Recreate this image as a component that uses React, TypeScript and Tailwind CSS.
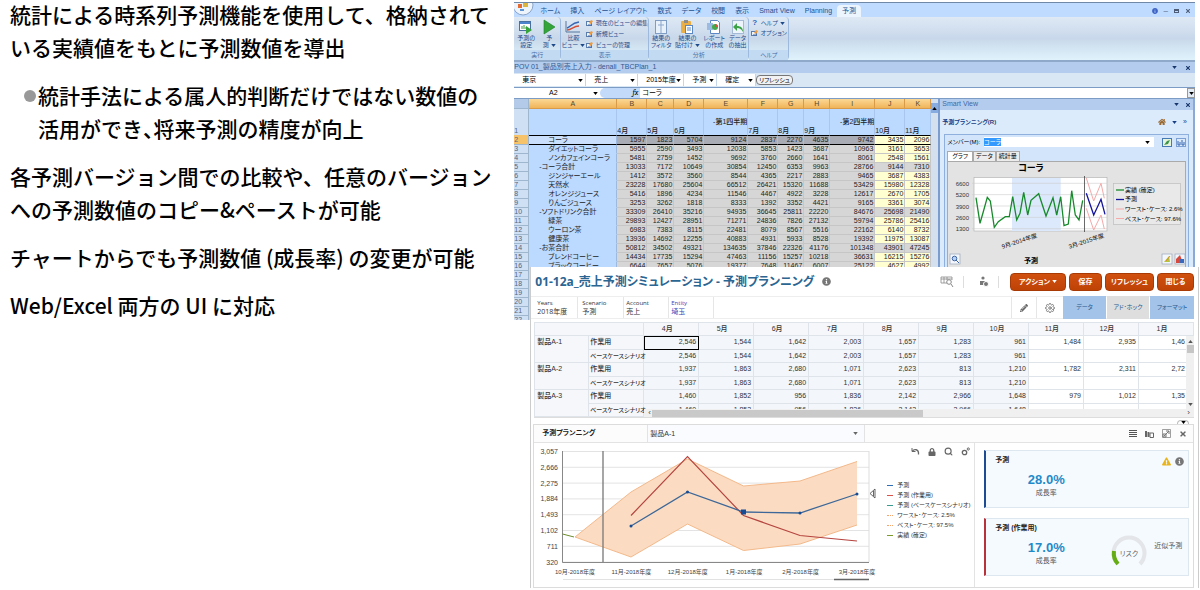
import type { ReactNode } from "react";
import { FaPencilAlt, FaLock, FaInfoCircle, FaExclamationTriangle, FaTimes, FaHome } from "react-icons/fa";
import { FiSettings, FiSearch } from "react-icons/fi";

const ribbonTabs = ["ホーム", "挿入", "ページ レイアウト", "数式", "データ", "校閲", "表示", "Smart View", "Planning", "予測"];

const columns = [
  { name: "A", width: "w-[88px]", head: "" },
  { name: "B", width: "w-[30px]", head: "4月" },
  { name: "C", width: "w-[27px]", head: "5月" },
  { name: "D", width: "w-[30px]", head: "6月" },
  { name: "E", width: "w-[44px]", head: "-第1四半期" },
  { name: "F", width: "w-[30px]", head: "7月" },
  { name: "G", width: "w-[26px]", head: "8月" },
  { name: "H", width: "w-[26px]", head: "9月" },
  { name: "I", width: "w-[45px]", head: "-第2四半期" },
  { name: "J", width: "w-[30px]", head: "10月" },
  { name: "K", width: "w-[26px]", head: "11月" },
];

const sheetRows: { label: string; total?: boolean; values: number[] }[] = [
  { label: "コーラ", values: [1597, 1823, 5704, 9124, 2837, 2270, 4635, 9742, 3435, 2096] },
  { label: "ダイエットコーラ", values: [5955, 2590, 3493, 12038, 5853, 1423, 3687, 10963, 3161, 3653] },
  { label: "ノンカフェインコーラ", values: [5481, 2759, 1452, 9692, 3760, 2660, 1641, 8061, 2548, 1561] },
  { label: "-コーラ合計", total: true, values: [13033, 7172, 10649, 30854, 12450, 6353, 9963, 28766, 9144, 7310] },
  { label: "ジンジャーエール", values: [1412, 3572, 3560, 8544, 4365, 2217, 2883, 9465, 3687, 4383] },
  { label: "天然水", values: [23228, 17680, 25604, 66512, 26421, 15320, 11688, 53429, 15980, 12328] },
  { label: "オレンジジュース", values: [5416, 1896, 4234, 11546, 4467, 4922, 3228, 12617, 2670, 1705] },
  { label: "りんごジュース", values: [3253, 3262, 1818, 8333, 1392, 3352, 4421, 9165, 3361, 3074] },
  { label: "-ソフトドリンク合計", total: true, values: [33309, 26410, 35216, 94935, 36645, 25811, 22220, 84676, 25698, 21490] },
  { label: "緑茶", values: [29893, 12427, 28951, 71271, 24836, 7826, 27132, 59794, 25786, 25416] },
  { label: "ウーロン茶", values: [6983, 7383, 8115, 22481, 8079, 8567, 5516, 22162, 6140, 8732] },
  { label: "健康茶", values: [13936, 14692, 12255, 40883, 4931, 5933, 8528, 19392, 11975, 13087] },
  { label: "-お茶合計", total: true, values: [50812, 34502, 49321, 134635, 37846, 22326, 41176, 101348, 43901, 47245] },
  { label: "ブレンドコーヒー", values: [14434, 17735, 15294, 47463, 11156, 15257, 10218, 36631, 16215, 15276] },
  { label: "ブラックコーヒー", values: [6644, 7657, 5076, 19377, 7648, 11467, 6007, 25122, 4627, 4992] },
];

const months = ["4月", "5月", "6月", "7月", "8月", "9月", "10月", "11月", "12月", "1月"];

const planRows = [
  { product: "製品A-1", scenario: "作業用", values: ["2,546", "1,544", "1,642", "2,003", "1,657", "1,283", "961", "1,484", "2,935", "1,46"] },
  { product: "", scenario: "ベースケースシナリオ", values: ["2,546", "1,544", "1,642", "2,003", "1,657", "1,283", "961", "", "", ""] },
  { product: "製品A-2", scenario: "作業用", values: ["1,937", "1,863", "2,680", "1,071", "2,623", "813", "1,210", "1,782", "2,311", "2,72"] },
  { product: "", scenario: "ベースケースシナリオ", values: ["1,937", "1,863", "2,680", "1,071", "2,623", "813", "1,210", "", "", ""] },
  { product: "製品A-3", scenario: "作業用", values: ["1,460", "1,852", "956", "1,836", "2,142", "2,966", "1,648", "979", "1,012", "1,35"] },
  { product: "", scenario: "ベースケースシナリオ", values: ["1,460", "1,852", "956", "1,836", "2,142", "2,966", "1,648", "", "", ""] },
];

function Caret({ className = "" }: { className?: string }) {
  return (
    <svg viewBox="0 0 6 4" className={`pointer-events-none h-[3px] w-[5px] ${className}`} fill="currentColor">
      <path d="M0 0h6L3 4z" />
    </svg>
  );
}

function PovSelect({ label, value, width }: { label: string; value: string; width: string }) {
  return (
    <div className={`relative flex items-center border-r border-[#c5d5ea] bg-white ${width}`}>
      <select aria-label={label} className="h-3 w-full appearance-none bg-transparent pl-2 text-[7px] leading-3">
        <option>{value}</option>
      </select>
      <Caret className="absolute right-0.5" />
    </div>
  );
}

function RibbonGroup({ title, width, children }: { title: string; width: string; children: ReactNode }) {
  return (
    <div className={`flex flex-col rounded-sm border-r border-[#9db9dd] ${width}`}>
      <div className="flex h-8 flex-1 justify-around">{children}</div>
      <div className="h-[10px] bg-[#c3daf3] text-center text-[6px] leading-[10px] text-[#4a6d9e]">{title}</div>
    </div>
  );
}

function BigButton({ icon, lines, caret }: { icon: ReactNode; lines: [string, string]; caret?: boolean }) {
  return (
    <button className="flex flex-col items-center pt-0.5 text-[6px] leading-[7px] whitespace-nowrap text-[#1f4a8a]">
      {icon}
      <span>{lines[0]}</span>
      <span className="flex items-center gap-0.5">
        {lines[1]}
        {caret && <Caret className="w-[3px]" />}
      </span>
    </button>
  );
}

function SmallButton({ icon, text, caret }: { icon: ReactNode; text: string; caret?: boolean }) {
  return (
    <button className="flex items-center gap-0.5 text-[6px] leading-[8px] whitespace-nowrap text-[#1f4a8a]">
      {icon}
      {text}
      {caret && <Caret className="w-[3px]" />}
    </button>
  );
}

function SheetIcon({ children }: { children: ReactNode }) {
  return (
    <svg viewBox="0 0 16 16" className="h-4 w-4">
      {children}
    </svg>
  );
}

const viewIcon = (
  <svg viewBox="0 0 8 8" className="h-2 w-2">
    <rect x="0.5" y="2.5" width="5" height="4" fill="#e9f2fd" stroke="#5a7dae" />
    <path d="M3 4l2-3 2 1-2 3z" fill="#f09a3a" />
    <path d="M2 6h4" stroke="#4468a5" />
  </svg>
);

function Ribbon() {
  return (
    <div className="flex h-11 border-b border-[#8fa9cb] bg-gradient-to-b from-[#dfe9f5] via-[#c8d8ea] to-[#e0f3fc]">
      <RibbonGroup title="実行" width="w-[47px]">
        <BigButton
          lines={["予測の", "設定"]}
          icon={
            <SheetIcon>
              <rect x="1.5" y="2.5" width="11" height="9" fill="#fff" stroke="#49709f" />
              <path d="M2 4h10" stroke="#4d86cf" strokeWidth="2" />
              <path d="M4 10V7M6 10V6M8 10V8" stroke="#3a9d3c" />
              <path d="M8 7l6 4-6 4z" fill="#35a53a" />
            </SheetIcon>
          }
        />
        <BigButton lines={["予", "測"]} caret icon={<SheetIcon><path d="M3 1l11 7-11 7z" fill="#35a53a" stroke="#1e7d2a" strokeWidth="0.6" /></SheetIcon>} />
      </RibbonGroup>
      <RibbonGroup title="表示" width="w-[88px]">
        <BigButton
          lines={["比較", "ビュー"]}
          caret
          icon={
            <SheetIcon>
              <path d="M1 2v11h14" fill="none" stroke="#56779f" />
              <path d="M2 9c4-1 4-5 12-6" fill="none" stroke="#3767b5" strokeWidth="1.4" />
              <path d="M2 11c5 0 6-4 12-4" fill="none" stroke="#d44d36" strokeWidth="1.4" />
            </SheetIcon>
          }
        />
        <div className="flex flex-col justify-around">
          <SmallButton icon={viewIcon} text="現在のビューの編集" />
          <SmallButton icon={viewIcon} text="新規ビュー" />
          <SmallButton icon={viewIcon} text="ビューの管理" />
        </div>
      </RibbonGroup>
      <RibbonGroup title="分析" width="w-[100px]">
        <BigButton
          lines={["結果の", "フィルタ"]}
          icon={
            <SheetIcon>
              <rect x="2.5" y="1.5" width="11" height="13" fill="#e8f0fa" stroke="#7e9cc4" />
              <path d="M8 2v12M5 6h6" stroke="#8ba7cc" />
            </SheetIcon>
          }
        />
        <BigButton
          lines={["結果の", "貼付け"]}
          caret
          icon={
            <SheetIcon>
              <rect x="2" y="2" width="10" height="12" rx="1" fill="#e9ae45" />
              <rect x="5" y="1" width="4" height="3" fill="#8d8d8d" />
              <rect x="6.5" y="6.5" width="7" height="8" fill="#fff" stroke="#5b87c5" />
              <path d="M8 9h4M8 11h4" stroke="#5b87c5" />
            </SheetIcon>
          }
        />
        <BigButton
          lines={["レポート", "の作成"]}
          icon={
            <SheetIcon>
              <path d="M4.500 1.500h7l2 2v11h-9z" fill="#fff" stroke="#5b87c5" />
              <rect x="1" y="4" width="6" height="7" fill="#9bbbe3" />
              <circle cx="9" cy="8" r="3" fill="#46a84a" />
              <path d="M9 8V5a3 3 0 0 1 3 3z" fill="#d8523f" />
            </SheetIcon>
          }
        />
        <BigButton
          lines={["データ", "の抽出"]}
          icon={
            <SheetIcon>
              <rect x="2.5" y="1.5" width="11" height="13" fill="#eef4fc" stroke="#a4b9d6" />
              <path d="M13 13c0-4-2-6-6-6V4L3 8l4 4V9c3 0 4 1 6 4z" fill="#3ca447" />
            </SheetIcon>
          }
        />
      </RibbonGroup>
      <RibbonGroup title="ヘルプ" width="w-10">
        <div className="flex flex-col gap-0.5 pt-0.5">
          <SmallButton icon={<b className="w-2 text-center text-[8px] text-[#2f62b5]">?</b>} text="ヘルプ" caret />
          <SmallButton icon={viewIcon} text="オプション" />
        </div>
      </RibbonGroup>
    </div>
  );
}

function Sheet() {
  return (
    <table className="w-[417px] shrink-0 table-fixed border-separate border-spacing-0 text-[7px] leading-[8px] whitespace-nowrap text-[#222]">
      <colgroup>
        <col className="w-[15px]" />
        {columns.map((c) => (
          <col key={c.name} className={c.width} />
        ))}
      </colgroup>
      <thead>
        <tr>
          <th className="h-[10px] border-r border-b border-[#9eb6ce] bg-[#b3cbe9] p-0" />
          {columns.map((c) => (
            <th key={c.name} className="h-[10px] border-r border-b border-[#d79b4a] bg-gradient-to-b from-[#fbd895] to-[#f0b458] p-0 font-normal text-[#54492f]">
              {c.name}
            </th>
          ))}
        </tr>
        <tr>
          <th className="h-[26px] border-r border-[#9eb6ce] bg-[#cfe0f5] p-0 text-left align-bottom font-normal text-[#54657e]">1</th>
          {columns.map((c) => (
            <th
              key={c.name}
              className={`h-[26px] border-r border-[#a9c6ee] bg-[#bcd9ff] p-0 text-left font-medium ${
                c.head.length > 3 ? "align-middle" : "align-bottom"
              }`}
            >
              <div className={c.head.length > 3 ? "flex justify-end" : ""}>{c.head}</div>
            </th>
          ))}
        </tr>
      </thead>
      <tbody>
        {sheetRows.map((row, r) => (
          <tr key={row.label}>
            <th
              className={`h-[9px] border-r border-b border-[#9eb6ce] p-0 text-left font-normal text-[#54657e] ${
                r === 0 ? "bg-[#f7c36a]" : "bg-[#cfe0f5]"
              }`}
            >
              {r + 2}
            </th>
            <td
              className={`h-[9px] border-r border-b border-r-[#9db9de] p-0 ${
                r === 0 ? "border-t border-t-black border-b-black bg-[#c9dffc]" : "border-b-[#bcd9ff] bg-[#bcd9ff]"
              } ${row.total ? "pl-[10px]" : "pl-[19px]"}`}
            >
              {row.label}
            </td>
            {row.values.map((value, i) => (
              <td
                key={i}
                className={`h-[9px] border-r border-b p-0 pr-px text-right ${
                  r === 0 ? "border-t border-t-black border-r-[#bbb] border-b-black" : "border-[#c6c6c6]"
                } ${i > 7 && !row.total ? "bg-[#ffffd2]" : r === 0 ? "bg-[#a9abb5]" : "bg-[#d6d6d6]"}`}
              >
                {value}
              </td>
            ))}
          </tr>
        ))}
        {[17, 18, 19, 20, 21, 22].map((n) => (
          <tr key={n}>
            <th className="h-[9px] border-r border-b border-[#9eb6ce] bg-[#cfe0f5] p-0 text-left font-normal text-[#54657e]">{n}</th>
            <td colSpan={11} className="h-[9px] bg-[#bcd9ff] p-0" />
          </tr>
        ))}
      </tbody>
    </table>
  );
}

function SmartChart() {
  return (
    <svg viewBox="0 0 242 106" className="block h-[106px] w-[242px]" fontSize="7">
      <text x="83" y="9" fontSize="9" fontWeight="bold" textAnchor="middle">コーラ</text>
      <rect x="26" y="15.5" width="133" height="53.5" fill="#fff" stroke="#b5b5b5" strokeWidth="0.7" />
      <rect x="64" y="16" width="48.7" height="53" fill="#dce8fb" />
      {["6600", "5200", "3900", "2600", "1300"].map((t, i) => (
        <g key={t}>
          <path d={`M24 ${21.3 + i * 11.35}H159`} stroke="#cdcdcd" strokeWidth="0.6" />
          <text x="21" y={23.8 + i * 11.35} fontSize="6" textAnchor="end" fill="#333">{t}</text>
        </g>
      ))}
      <path d="M136.500 14V70" stroke="#444" strokeWidth="0.8" />
      <polyline
        fill="none"
        stroke="#178a2b"
        strokeWidth="1.3"
        points="28,35.7 32,61.3 35.3,49.7 39.3,35.3 42.3,39 46.3,65.3 50.3,59.7 57.3,54.7 61.3,54.7 64.7,34.7 68.7,58 72,51.3 75.7,30.3 79.7,53 83,38.3 90.7,31.7 98,54 105,35.7 108.7,53 112.7,34.7 116,63.7 120.3,62 123.7,28.7 127.3,53 131,58 134.7,38.3"
      />
      <polyline fill="none" stroke="#14149c" strokeWidth="1.3" points="138.3,31.3 145.7,53 153,37.3 157,52.3" />
      <polyline fill="none" stroke="#f5a9a9" points="138.3,16 145.7,39 153,21.3 156.3,36.3" />
      <polyline fill="none" stroke="#f5a9a9" points="138.3,46.3 145.7,68 153,53 156.3,67" />
      <text transform="translate(72 81) rotate(-18)" fontSize="6" textAnchor="middle">9月-2014年度</text>
      <text transform="translate(139 81) rotate(-18)" fontSize="6" textAnchor="middle">3月-2015年度</text>
      <rect x="165.5" y="21.5" width="67" height="41" fill="#e9e9e9" stroke="#bdbdbd" strokeWidth="0.7" />
      <path d="M168 28h8" stroke="#178a2b" strokeWidth="1.3" />
      <path d="M168 37.500h8" stroke="#14149c" strokeWidth="1.3" />
      <path d="M168 47h8M168 56.500h8" stroke="#f5a9a9" />
      <g fontSize="6">
        <text x="177" y="30">実績 (確定)</text>
        <text x="177" y="39">予測</text>
        <text x="177" y="49">ワースト･ケース: 2.6%</text>
        <text x="177" y="59">ベスト･ケース: 97.6%</text>
      </g>
      <text x="83" y="101" fontWeight="bold" textAnchor="middle">予測</text>
      <g fill="#f3f6fb" stroke="#98a5ba" strokeWidth="0.7">
        <rect x="2" y="92" width="10" height="10" />
        <rect x="214" y="92" width="10" height="10" />
        <rect x="227" y="92" width="10" height="10" />
      </g>
      <circle cx="6.5" cy="96.5" r="2.3" fill="#b9d2f3" stroke="#3c66a8" />
      <path d="M8 98l3 3" stroke="#3c66a8" />
      <path d="M216 100l5-6 1 6z" fill="#b4c43f" />
      <path d="M218 99l4-5" stroke="#e0892c" />
      <path d="M228 101v-4l4-4 3 8z" fill="#d6493c" />
      <path d="M232 101v-4h4v4z" fill="#3a68bb" />
    </svg>
  );
}

function SmartView() {
  return (
    <aside className="flex min-w-0 flex-1 flex-col border-r-2 border-[#8ba9d4] bg-[#dcebfc] text-[7px]">
      <div className="flex h-[11px] items-center justify-between bg-[#b4cdee] px-0.5 text-[#4467a0]">
        <span>Smart View</span>
        <span className="flex items-center gap-1.5 text-[#17346b]">
          <Caret />
          <FaTimes className="h-[6px] w-[6px]" />
        </span>
      </div>
      <div className="flex h-6 items-center justify-between pr-1.5 pl-0.5 text-[#173f86]">
        <h2 className="text-[6px] font-bold">予測プランニング(R)</h2>
        <span className="flex items-center gap-1.5">
          <FaHome className="h-2 w-2 text-[#9a6a32]" />
          <Caret />
          <span>»</span>
        </span>
      </div>
      <div className="mx-1 flex flex-1 flex-col border border-b-0 border-[#8fb0dc] bg-[#d3e5fa]">
        <div className="flex h-[14px] items-center gap-1 px-0.5">
          <label htmlFor="member" className="text-[6px] whitespace-nowrap">メンバー(M):</label>
          <div className="relative flex h-[10px] flex-1 items-center bg-white">
            <select id="member" className="h-[10px] w-full appearance-none bg-transparent leading-[10px] text-transparent">
              <option>コーラ</option>
            </select>
            <span className="pointer-events-none absolute left-0 bg-[#3399ff] text-[6px] leading-[8px] text-white">コーラ</span>
            <Caret className="absolute right-1" />
          </div>
          <button aria-label="適用" className="ml-1 h-[9px] w-[10px] border border-[#4479b3] bg-[#e6f3df]">
            <svg viewBox="0 0 8 7"><path d="M1 6l3-4 3-1-2 4z" fill="#3a9647" /></svg>
          </button>
          <button aria-label="更新" className="h-[9px] w-[10px] border border-[#7da0d4] bg-[#dce9fb]">
            <svg viewBox="0 0 8 7"><path d="M1 2v4h2V3M5 1v5h2V3" fill="none" stroke="#3564b0" /></svg>
          </button>
        </div>
        <div className="flex items-end px-0.5 pt-0.5 text-[6px] leading-[9px]">
          <button className="border border-b-0 border-[#aaa] bg-white px-1">グラフ</button>
          <button className="border border-b-0 border-[#aaa] bg-[#ececec] px-0.5">データ</button>
          <button className="border border-b-0 border-[#aaa] bg-[#ececec] px-0.5">統計量</button>
        </div>
        <div className="mx-0.5 flex-1 overflow-hidden border border-[#aaa] bg-[#e3e3e3] text-[#222]">
          <SmartChart />
        </div>
      </div>
    </aside>
  );
}

function SpreadsheetWindow() {
  return (
    <section className="mr-[5px] h-[318px] overflow-hidden border-t border-[#7088a8]">
      <div className="relative bg-white">
        <div className="flex h-[14px] items-end bg-[#bfdbff] text-[7px] leading-3 text-[#24508f]">
          <svg viewBox="0 0 21 14" className="h-[14px] w-[21px]">
            <circle cx="9" cy="2" r="10" fill="#eef4fb" stroke="#8aa5c8" />
            <path d="M4 1h4v4H4z" fill="#e46b32" />
            <path d="M9 0h5v4H9z" fill="#dcb53c" />
            <path d="M6 6h4v2H6z" fill="#5b94d5" />
          </svg>
          {ribbonTabs.map((tab) => (
            <button key={tab} className={`px-[5px] whitespace-nowrap ${tab === "予測" ? "rounded-t-sm bg-[#ecf5fe]" : ""}`}>
              {tab}
            </button>
          ))}
          <span className="ml-auto flex items-center gap-1.5 pr-1 text-[8px] leading-3 text-[#4d5d78]">
            <FaInfoCircle className="h-[6px] w-[6px] text-[#3e62c5]" />
            <span>–</span>
            <span className="h-1 w-[5px] border border-t-2 border-[#4d5d78]" />
            <FaTimes className="h-[6px] w-[6px]" />
          </span>
        </div>
        <Ribbon />
        <div className="flex h-3 items-center justify-between border-t border-[#8fa9cb] bg-[#b4cdee] pr-1 text-[7px] text-[#33578f]">
          <span>POV 01_製品別売上入力 - denali_TBCPlan_1</span>
          <span className="flex items-center gap-2 text-[#17346b]">
            <Caret />
            <FaTimes className="h-[6px] w-[6px]" />
          </span>
        </div>
        <div className="flex h-[14px] items-center bg-[#d9e7f5]">
          <PovSelect label="市場" value="東京" width="w-[72px]" />
          <PovSelect label="勘定科目" value="売上" width="w-[52px]" />
          <PovSelect label="年度" value="2015年度" width="w-[46px]" />
          <PovSelect label="シナリオ" value="予測" width="w-[33px]" />
          <PovSelect label="バージョン" value="確定" width="w-[39px]" />
          <button className="rounded-sm border border-[#777] bg-[#f2f2f2] px-0.5 text-[6px] leading-[8px]">リフレッシュ</button>
        </div>
        <div className="flex h-3 border-y border-[#7c9cc6] bg-white text-[7px] leading-[10px]">
          <div className="relative flex w-[86px] items-center justify-center pr-2">
            A2
            <Caret className="absolute right-0.5" />
          </div>
          <div className="flex w-10 items-center justify-end rounded-l-full bg-[#c3dafa] pr-0.5 font-serif text-[8px] italic">fx</div>
          <input aria-label="数式バー" defaultValue="コーラ" className="min-w-0 flex-1 px-0.5" />
          <span className="flex w-2 items-center justify-center border border-[#999] bg-[#e3ebf5]"><Caret /></span>
        </div>
        <div className="flex">
          <Sheet />
          <div className="flex w-[9px] flex-col items-center border-r-2 border-[#7b9cce] bg-[#d5e0ee]">
            <span className="mt-1 flex h-[10px] w-full items-center justify-center bg-[#88abe0]"><Caret className="rotate-180" /></span>
          </div>
          <SmartView />
        </div>
      </div>
    </section>
  );
}

function Field({ label, value, width, link }: { label: string; value: string; width: string; link?: boolean }) {
  return (
    <div className={`flex flex-col justify-center border-r border-[#e6e6e6] ${width} ${link ? "text-[#3c3fb5]" : "text-[#333]"}`}>
      <span className="text-[6px] leading-[8px]">{label}</span>
      {link ? <a href="#entity" className="text-[7px] leading-[9px]">{value}</a> : <span className="text-[7px] leading-[9px]">{value}</span>}
    </div>
  );
}

function PlanGrid() {
  return (
    <div className="relative mt-[3px] mr-1 ml-[3px] h-[96px] overflow-hidden border-b border-[#ddd]">
      <table className="w-full table-fixed border-separate border-spacing-0 text-[7px] leading-[12px] whitespace-nowrap text-[#333]">
        <thead>
          <tr>
            <th colSpan={2} className="h-[13px] border border-[#dfe3ea] bg-[#f5f7fb] p-0" />
            {months.map((m) => (
              <th key={m} className="h-[13px] border-y border-r border-[#dfe3ea] bg-[#f5f7fb] p-0 pr-2 font-medium">{m}</th>
            ))}
          </tr>
        </thead>
        <tbody>
          {planRows.map((row, r) => {
            const height = r % 2 === 0 ? "h-[14px]" : "h-[13px]";
            return (
              <tr key={r}>
                <th className={`border-x border-[#dfe3ea] bg-[#f5f7fb] p-0 pl-0.5 text-left align-top font-medium ${height} ${row.product ? "" : "border-b"}`}>
                  {row.product}
                </th>
                <th className={`border-r border-b border-[#dfe3ea] bg-[#f5f7fb] p-0 pl-px text-left align-top font-medium ${height} ${row.product ? "" : "text-[6px]"}`}>
                  {row.scenario}
                </th>
                {row.values.map((value, i) => (
                  <td
                    key={i}
                    className={`overflow-hidden border-r border-b border-[#dfe3ea] p-0 text-right align-top ${height} ${
                      i < 7 ? "bg-[#f3f6fb]" : "bg-white"
                    } ${r === 0 && i === 0 ? "outline outline-1 -outline-offset-1 outline-black" : ""} ${i === 9 ? "pr-2" : "pr-0.5"}`}
                  >
                    {value}
                  </td>
                ))}
              </tr>
            );
          })}
        </tbody>
      </table>
      <div className="absolute top-[14px] right-0 flex h-[74px] w-2 flex-col items-center justify-between bg-[#f0f0f0] py-1 text-[#555]">
        <Caret className="rotate-180" />
        <span className="mt-0.5 mb-auto h-2 w-[7px] bg-[#c6c6c6]" />
        <Caret />
      </div>
      <div className="absolute right-0 bottom-0 flex h-2 w-5/6 items-center justify-between bg-[#f0f0f0] px-1 text-[8px] leading-[8px] text-[#444]">
        <span>‹</span>
        <span className="mr-auto ml-px h-[7px] w-1/2 bg-[#c9c9c9]" />
        <span>›</span>
      </div>
    </div>
  );
}

function ForecastChart() {
  const labels = ["3,057", "2,666", "2,275", "1,884", "1,493", "1,102", "711", "320"];
  const periods = ["10月-2018年度", "11月-2018年度", "12月-2018年度", "1月-2018年度", "2月-2018年度", "3月-2018年度"];
  return (
    <svg viewBox="0 0 346 142" className="h-[142px] w-[346px] shrink-0" fontSize="7" fill="#444">
      {labels.map((t, i) => (
        <g key={t}>
          <path d={`M28 ${8.5 + i * 15.8}H335`} stroke="#dcdcdc" strokeWidth="0.8" />
          <text x="24" y={11 + i * 15.8} textAnchor="end">{t}</text>
        </g>
      ))}
      <polygon points="41,94 97,49 153.5,16 209.5,43 266,38 323,18.5 323,82 266,101 209.5,107.5 153.5,81 97,114" fill="#fbdcc2" />
      <path d="M41 94L97 49L153.500 16L209.500 43L266 38L323 18.500M41 94L97 114L153.500 81L209.500 107.500L266 101L323 82" fill="none" stroke="#f3b98b" />
      <path d="M28.500 8V119.500H335" fill="none" stroke="#888" />
      <path d="M335 8V119" stroke="#ddd" />
      <path d="M69 8V119" stroke="#777" strokeWidth="1.3" />
      <path d="M28.500 91L40 94" stroke="#6c8c2c" />
      <polyline points="97,72.5 153.5,13.5 209.5,72.5 266,92.5 323,98" fill="none" stroke="#b5443f" strokeWidth="1.2" />
      <polyline points="97,83 153.5,49 209.5,69 266,70 323,51" fill="none" stroke="#3d6798" strokeWidth="1.3" />
      <g fill="#174b94">
        <circle cx="97" cy="83" r="1.5" />
        <circle cx="153.5" cy="49" r="1.5" />
        <rect x="207" y="66.5" width="5" height="5" />
        <circle cx="266" cy="70" r="1.5" />
        <circle cx="323" cy="51" r="1.5" />
      </g>
      <path d="M341 46v9l-5-4.500zM339.500 48v5" fill="#fff" stroke="#555" strokeWidth="0.9" />
      {periods.map((p, i) => (
        <text key={p} x={41 + i * 56.4} y="131" fontSize="6" textAnchor="middle">{p}</text>
      ))}
      <path d="M29 136.500H300" stroke="#e2e2e2" />
      <path d="M300 136.500H335" stroke="#666" strokeWidth="1.3" />
    </svg>
  );
}

const legend = [
  { text: "予測", color: "border-[#2f6db5]" },
  { text: "予測 (作業用)", color: "border-[#d9534a]" },
  { text: "予測 (ベースケースシナリオ)", color: "border-[#3a9a8e]" },
  { text: "ワースト･ケース: 2.5%", color: "border-dotted border-[#f3a56c]" },
  { text: "ベスト･ケース: 97.5%", color: "border-dotted border-[#f3a56c]" },
  { text: "実績 (確定)", color: "border-[#7d9a2c]" },
];

function KpiCard({ title, value, bar, children }: { title: string; value: string; bar: string; children: ReactNode }) {
  return (
    <article className={`flex h-[58px] border border-l-2 border-[#dde7ef] bg-[#f5faff] ${bar}`}>
      <div className="w-[116px] pt-1">
        <h3 className="pl-[9px] text-[7px] leading-[10px] font-bold text-[#222]">{title}</h3>
        <div className="pt-1.5 pl-1 text-center">
          <p className="text-[13px] leading-[17px] font-bold text-[#1f8ac9]">{value}</p>
          <p className="text-[7px] leading-[9px] text-[#555]">成長率</p>
        </div>
      </div>
      {children}
    </article>
  );
}

function ForecastPanel() {
  return (
    <section className="relative mt-1.5 mr-1 ml-0.5 border border-[#dcdcdc]">
      <button aria-label="折りたたむ" className="absolute -top-[5px] right-1 flex h-1 w-3 items-center justify-center rounded-t-sm border border-b-0 border-[#bbb] bg-white">
        <Caret />
      </button>
      <header className="flex h-[18px] items-center border-b border-[#e3e3e3] bg-[#fcfcfc]">
        <h2 className="w-[113px] pl-2 text-[7px] font-bold text-[#222]">予測プランニング</h2>
        <div className="relative flex h-full w-[218px] items-center border-x border-[#e3e3e3] bg-[#fafbfe]">
          <select aria-label="製品" className="h-4 w-full appearance-none pl-0.5 text-[7px] leading-4 text-[#333]">
            <option>製品A-1</option>
          </select>
          <Caret className="absolute right-1.5 text-[#666]" />
        </div>
        <div className="ml-auto flex items-center gap-2 pr-1.5 text-[#666]">
          <button aria-label="一覧" className="flex w-2 flex-col gap-px">
            <span className="h-px bg-[#555]" /><span className="h-px bg-[#555]" /><span className="h-px bg-[#555]" /><span className="h-px bg-[#555]" />
          </button>
          <button aria-label="コピー">
            <svg viewBox="0 0 9 8" className="h-2 w-[9px]"><path d="M0 1h2v6H0zM2.500 2h2v5h-2z" fill="#666" /><path d="M5 3h3.500v4.500H5z" fill="#fff" stroke="#666" /></svg>
          </button>
          <button aria-label="最大化">
            <svg viewBox="0 0 9 9" className="h-[9px] w-[9px]" fill="none" stroke="#777"><path d="M.5 .5h8v8h-8z" strokeWidth="0.7" /><path d="M2 7l5-5M7 5V2H4M1 8V5h3v3z" /></svg>
          </button>
          <button aria-label="閉じる"><FaTimes className="h-2 w-2" /></button>
        </div>
      </header>
      <div className="flex h-[144px]">
        <ForecastChart />
        <div className="w-[94px] shrink-0">
          <div className="flex items-center justify-end gap-2 pt-1 pr-1 text-[#666]">
            <button aria-label="元に戻す">
              <svg viewBox="0 0 9 9" className="h-[9px] w-[9px]" fill="none" stroke="#666">
                <path d="M1 1v3.500h3.500" /><path d="M1.500 4C3 2 8 1.500 7.500 7.500" strokeWidth="1.3" />
              </svg>
            </button>
            <button aria-label="ロック"><FaLock className="h-2 w-2" /></button>
            <button aria-label="ズーム"><FiSearch className="h-[9px] w-[9px]" strokeWidth={3} /></button>
            <button aria-label="設定">
              <svg viewBox="0 0 9 9" className="h-[9px] w-[9px]" fill="none" stroke="#666"><circle cx="3.5" cy="5.5" r="2.2" strokeWidth="1.3" /><circle cx="7.3" cy="2" r="1.1" /></svg>
            </button>
          </div>
          <ul className="pt-6 pl-[7px] text-[6px] leading-[10px] whitespace-nowrap text-[#333]">
            {legend.map((item) => (
              <li key={item.text} className="flex items-center gap-1">
                <span className={`w-[6px] shrink-0 border-t ${item.color}`} />
                {item.text}
              </li>
            ))}
          </ul>
        </div>
        <div className="flex flex-1 flex-col gap-[10px] overflow-hidden border-l border-[#e3e3e3] pt-[7px] pr-1 pl-[9px]">
          <KpiCard title="予測" value="28.0%" bar="border-l-[#1d4b94]">
            <div className="ml-auto flex gap-1 pt-1.5 pr-1">
              <FaExclamationTriangle className="h-[9px] w-[9px] text-[#e9b41c]" />
              <FaInfoCircle className="h-[9px] w-[9px] text-[#777]" />
            </div>
          </KpiCard>
          <KpiCard title="予測 (作業用)" value="17.0%" bar="border-l-[#b8323a]">
            <svg viewBox="0 0 38 38" className="mt-4 ml-2 h-[38px] w-[38px]" fill="none" strokeWidth="4">
              <path d="M8 29A15.500 15.500 0 1 1 30 29" stroke="#e3e5e8" />
              <path d="M8 29A15.500 15.500 0 0 1 4 16" stroke="#66ad15" />
              <text x="19" y="21" fontSize="7" textAnchor="middle" fill="#666" strokeWidth="0">リスク</text>
            </svg>
            <span className="mt-[22px] ml-1.5 text-[7px] leading-[10px] whitespace-nowrap text-[#555]">近似予測</span>
          </KpiCard>
        </div>
      </div>
    </section>
  );
}

function WebWindow() {
  const action = "h-[18px] rounded-sm border border-[#a83a06] bg-gradient-to-b from-[#d0500f] to-[#bf4206] text-[7px] leading-4 font-bold whitespace-nowrap text-white";
  const tab = "h-[23px] text-[6px] whitespace-nowrap text-[#285a8c]";
  return (
    <section className="relative mr-px -mt-[53px] ml-4 border-x border-[#ccc] bg-white">
      <div className="flex h-[29px] items-center pr-1 pl-1">
        <h1 className="font-['Open_Sans','Noto_Sans_CJK_JP',sans-serif] text-[12px] font-bold whitespace-nowrap text-[#2b6592]">
          01-12a_売上予測シミュレーション - 予測プランニング
        </h1>
        <FaInfoCircle className="ml-2 h-[9px] w-[9px] text-[#777]" />
        <div className="ml-auto flex items-center gap-[3px]">
          <button aria-label="検索" className="mr-1 flex h-3 w-6 items-center border-r border-[#ddd]">
            <svg viewBox="0 0 14 12" className="h-3 w-[14px]" fill="none" stroke="#888">
              <path d="M7 7H1V1h11v3M1 3h11M4 1v6M7 1v3" strokeWidth="0.8" /><circle cx="9" cy="6" r="2.3" fill="#fff" /><path d="M11 8l2 3" />
            </svg>
          </button>
          <button aria-label="ユーザー" className="mr-2 ml-2 flex h-3 w-5 items-center border-r border-[#ddd]">
            <svg viewBox="0 0 10 12" className="h-3 w-[10px]" fill="#777"><circle cx="4" cy="2" r="1.6" /><path d="M1 9V5h5v4z" /><circle cx="7" cy="8" r="2.5" stroke="#fff" /></svg>
          </button>
          <button className={`flex w-14 items-center justify-center gap-0.5 ${action}`}>アクション<Caret /></button>
          <button className={`w-[33px] ${action}`}>保存</button>
          <button className={`w-[49px] ${action}`}>リフレッシュ</button>
          <button className={`w-[37px] ${action}`}>閉じる</button>
        </div>
      </div>
      <div className="mr-1 flex h-[23px] border-y border-[#eee] pl-1.5 font-['Open_Sans','Noto_Sans_CJK_JP',sans-serif]">
        <Field label="Years" value="2018年度" width="w-[41px]" />
        <Field label="Scenario" value="予測" width="w-[46px] pl-1" />
        <Field label="Account" value="売上" width="w-[45px] pl-0.5" />
        <Field label="Entity" value="埼玉" width="w-[45px] pl-0.5" link />
        <div className="ml-auto flex items-center gap-px text-[#666]">
          <button aria-label="編集" className="flex h-full w-6 items-center justify-center border-l border-[#e6e6e6]"><FaPencilAlt className="h-2 w-2" /></button>
          <button aria-label="設定" className="flex h-full w-[26px] items-center justify-center border-l border-[#e6e6e6]"><FiSettings className="h-[10px] w-[10px]" /></button>
          <button className={`w-[43px] bg-[#a3c3e8] ${tab}`}>データ</button>
          <button className={`w-[42px] bg-[#dedede] ${tab}`}>アド･ホック</button>
          <button className={`w-[44px] bg-[#a3c3e8] ${tab}`}>フォーマット</button>
        </div>
      </div>
      <PlanGrid />
      <ForecastPanel />
    </section>
  );
}

export default function App() {
  return (
    <main className="flex items-start overflow-hidden bg-white font-['Liberation_Sans','Noto_Sans_CJK_JP',sans-serif] text-black" lang="ja">
      <div className="-mt-0.5 w-3/7 shrink-0 space-y-[15px] pl-[10px] font-['Noto_Sans_CJK_JP',sans-serif] text-[21px] leading-[33px] font-medium whitespace-nowrap">
        <p>
          統計による時系列予測機能を使用して、格納されて
          <br />
          いる実績値をもとに予測数値を導出
        </p>
        <ul className="pl-[14px]">
          <li className="flex">
            <span className="mt-[11px] mr-0.5 h-3 w-3 shrink-0 rounded-full bg-[#999]" />
            <span>
              統計手法による属人的判断だけではない数値の
              <br />
              活用ができ<span className="[font-feature-settings:'halt']">、</span>将来予測の精度が向上
            </span>
          </li>
        </ul>
        <p>
          各予測バージョン間での比較や、任意のバージョン
          <br />
          への予測数値のコピー&amp;ペーストが可能
        </p>
        <p>チャートからでも予測数値 (成長率) の変更が可能</p>
        <p>Web/Excel 両方の UI に対応</p>
      </div>
      <div className="min-w-0 flex-1 pt-0.5 [font-feature-settings:'palt']">
        <SpreadsheetWindow />
        <WebWindow />
      </div>
    </main>
  );
}
